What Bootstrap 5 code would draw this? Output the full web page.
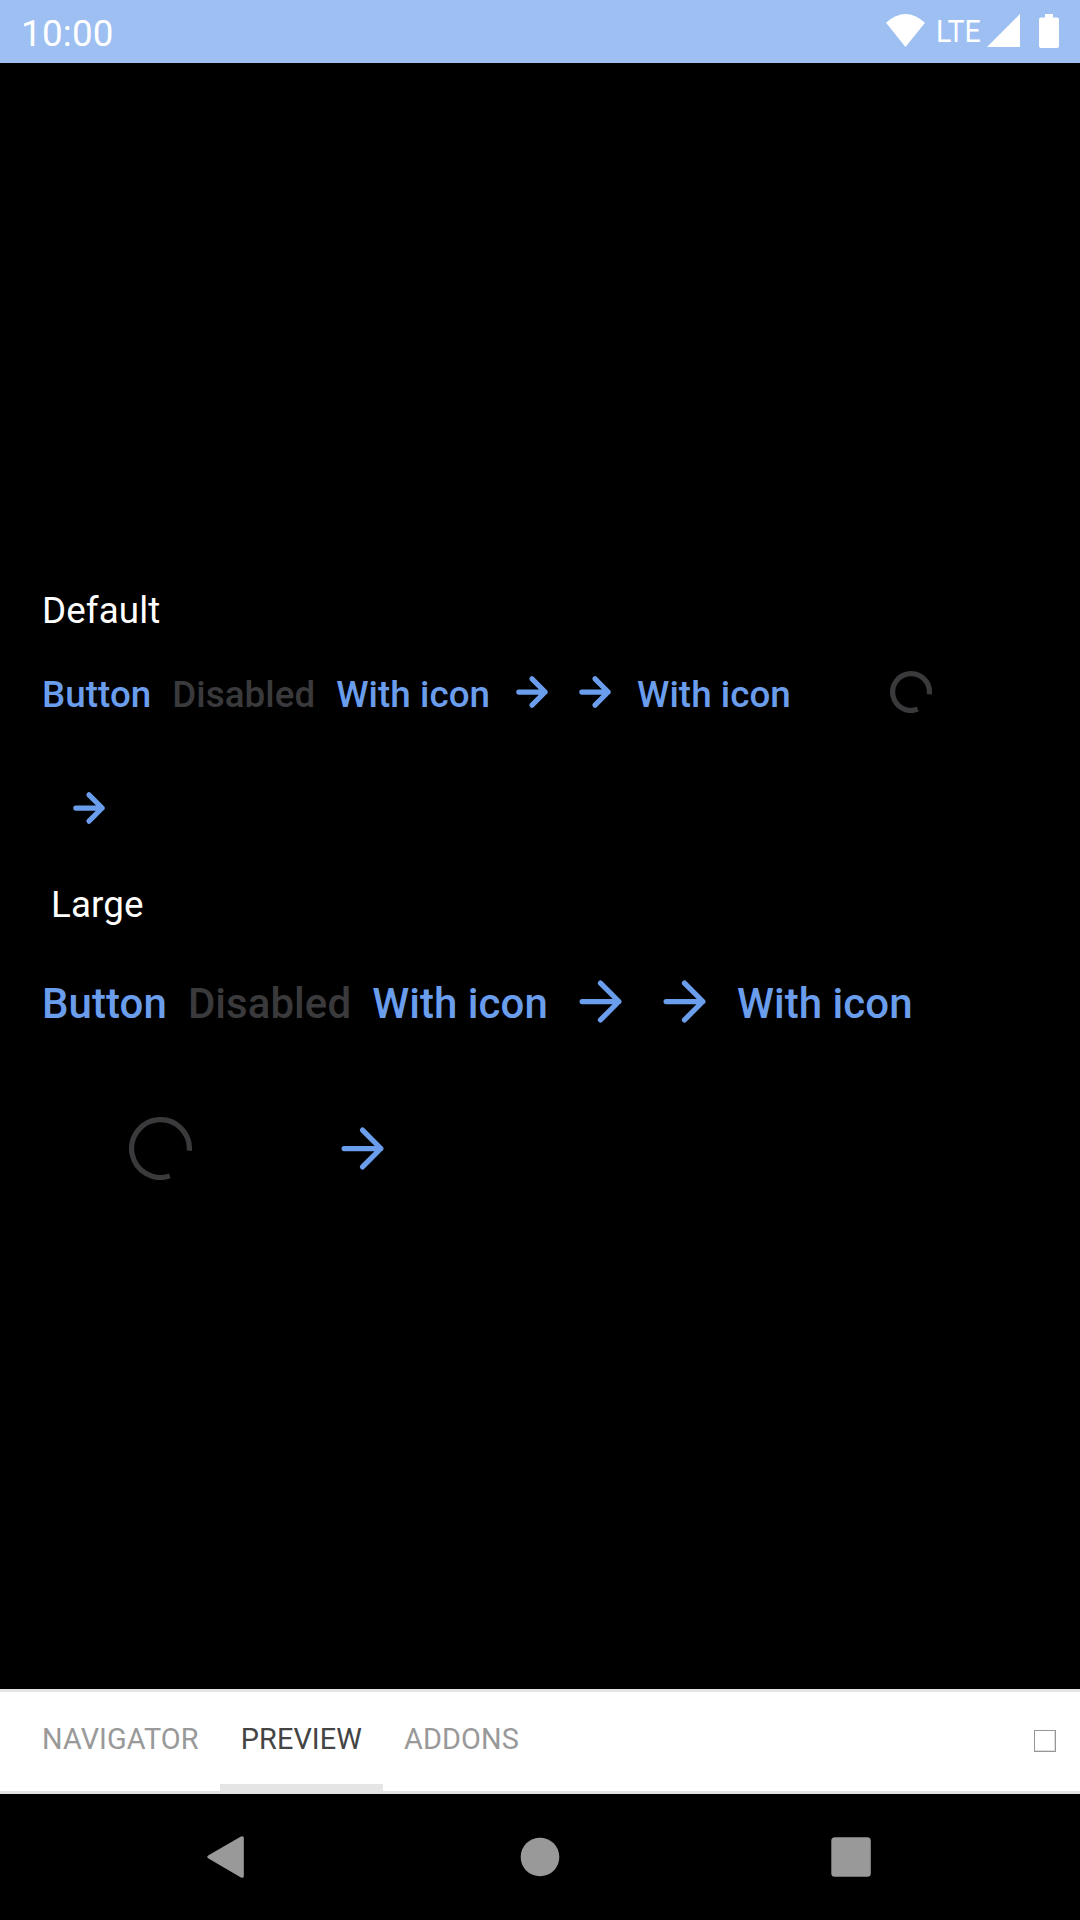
<!DOCTYPE html>
<html lang="en">
<head>
<meta charset="utf-8">
<meta name="viewport" content="width=device-width, initial-scale=1">
<title>Button preview</title>
<link href="https://cdn.jsdelivr.net/npm/bootstrap@5.3.0/dist/css/bootstrap.min.css" rel="stylesheet">
<style>
body { font-family: Roboto, sans-serif; background: #000; width: 1080px; height: 1920px; overflow: hidden; }
.status-bar { height: 63px; background: #9dbff2; padding: 0 21px 0 21px; font-size: 36.75px; line-height: 63px; }
.status-bar svg { display: block; }
.clock { padding-top: 2px; letter-spacing: .25px; }
.lte { font-size: 32px; width: 44px; transform: scaleX(.89); transform-origin: 0 50%; margin-left: 11px; margin-right: 4px; }
.stage { padding: 526px 42px 0; height: 1626px; }
.caption { font-size: 36.75px; line-height: 44px; letter-spacing: .1px; }
.caption-default { margin-bottom: 12px; height: 44px; }
.caption-large { margin: 28px 0 11.25px 9px; height: 44px; }
.btn-row { gap: 21px; }
.txt-btn { --bs-btn-padding-x: 0; --bs-btn-padding-y: 0; --bs-btn-border-width: 0; --bs-btn-border-radius: 0; --bs-btn-font-weight: 500; --bs-btn-color: #6b9ded; --bs-btn-disabled-color: #3a3a3c; --bs-btn-disabled-opacity: 1; --bs-btn-font-size: 36.75px; height: 94.5px; gap: 21px; display: flex; align-items: center; justify-content: center; white-space: nowrap; }
.txt-btn span { padding-top: 5px; line-height: 44px; letter-spacing: .05px; }
.txt-btn svg { width: 42px; height: 42px; display: block; }
.txt-btn.big { --bs-btn-font-size: 42px; height: 126px; }
.txt-btn.big svg { width: 63px; height: 63px; }
.only-icon { width: 94.5px; }
.only-icon.big { width: 126px; }
.busy { width: 197.500px; }
.busy.big { width: 236px; }
.tab-bar { height: 105px; background: #fff; border-top: 3px solid #e5e5e5; border-bottom: 3px solid #e3e3e3; padding: 0 24px 0 21px; font-size: 28.875px; letter-spacing: .1px; }
.tab-bar .nav-link { padding: 0 21px; height: 99px; line-height: 95px; color: #999; border-bottom: 7px solid transparent; }
.tab-bar .nav-link.active { color: #444; border-bottom-color: #e5e5e5; }
.toggle-box { width: 22px; height: 22px; border: 1px solid #979797; box-shadow: inset -1px -1px #ddd; margin-bottom: 1px; }
.system-nav { height: 126px; }
</style>
</head>
<body class="d-flex flex-column">
<svg class="d-none">
  <symbol id="arrow" viewBox="0 0 16 16"><path d="M3 8h10M8 3l5 5-5 5" fill="none" stroke="currentColor" stroke-width="2" stroke-linecap="round" stroke-linejoin="round"/></symbol>
  <symbol id="arrow-lg" viewBox="0 0 24 24"><path d="M5 12h14M12 5l7 7-7 7" fill="none" stroke="currentColor" stroke-width="2" stroke-linecap="round" stroke-linejoin="round"/></symbol>
</svg>
<header class="status-bar d-flex justify-content-between text-white flex-shrink-0">
  <div class="clock">10:00</div>
  <div class="d-flex">
    <svg width="39" height="63" viewBox="886 0 39 63"><path d="M886 22.8Q905.5 5.2 925 22.8L905.5 47Z" fill="#fff"/></svg>
    <div class="lte">LTE</div>
    <svg width="75" height="63" viewBox="984 0 75 63"><path d="M987 47L1020 14V47Z" fill="#fff"/><path d="M1045 14h8v3.5h4a2 2 0 0 1 2 2V46a2 2 0 0 1-2 2h-16a2 2 0 0 1-2-2V19.500a2 2 0 0 1 2-2h4Z" fill="#fff"/></svg>
  </div>
</header>
<main class="stage flex-shrink-0">
  <div class="caption caption-default text-white">Default</div>
  <div class="btn-row d-flex flex-wrap">
    <button class="btn txt-btn"><span>Button</span></button>
    <button class="btn txt-btn" disabled><span>Disabled</span></button>
    <button class="btn txt-btn"><span>With icon</span><svg><use href="#arrow"/></svg></button>
    <button class="btn txt-btn"><svg><use href="#arrow"/></svg><span>With icon</span></button>
    <button class="btn txt-btn busy" disabled aria-label="Loading"><svg viewBox="-21 -21 42 42"><path d="M18.300 2.300A18.400 18.400 0 1 0 6.700 17.200" fill="none" stroke="currentColor" stroke-width="5.200"/></svg></button>
    <button class="btn txt-btn only-icon" aria-label="Next"><svg><use href="#arrow"/></svg></button>
  </div>
  <div class="caption caption-large text-white">Large</div>
  <div class="btn-row d-flex flex-wrap">
    <button class="btn txt-btn big"><span>Button</span></button>
    <button class="btn txt-btn big" disabled><span>Disabled</span></button>
    <button class="btn txt-btn big"><span>With icon</span><svg><use href="#arrow-lg"/></svg></button>
    <button class="btn txt-btn big"><svg><use href="#arrow-lg"/></svg><span>With icon</span></button>
    <button class="btn txt-btn big busy" disabled aria-label="Loading"><svg viewBox="-31.500 -31.500 63 63"><path d="M28.800 2.300A28.900 28.900 0 1 0 9.300 27.400" fill="none" stroke="currentColor" stroke-width="5.200"/></svg></button>
    <button class="btn txt-btn big only-icon" aria-label="Next"><svg><use href="#arrow-lg"/></svg></button>
  </div>
</main>
<nav class="tab-bar d-flex justify-content-between align-items-center flex-shrink-0">
  <div class="nav flex-nowrap">
    <a class="nav-link">NAVIGATOR</a>
    <a class="nav-link active">PREVIEW</a>
    <a class="nav-link">ADDONS</a>
  </div>
  <div class="toggle-box"></div>
</nav>
<footer class="system-nav flex-shrink-0">
  <svg class="d-block" width="1080" height="126" viewBox="0 1794 1080 126" fill="#999"><path d="M208.500 1858.500Q206 1857 208.500 1855.300L240.500 1836.800Q243.800 1835 243.800 1838V1876Q243.800 1879 240.500 1877.200Z"/><circle cx="540" cy="1857" r="19.300"/><rect x="831.300" y="1837.300" width="39.500" height="39.500" rx="3.500"/></svg>
</footer>
<script src="https://cdn.jsdelivr.net/npm/bootstrap@5.3.0/dist/js/bootstrap.bundle.min.js"></script>
</body>
</html>
